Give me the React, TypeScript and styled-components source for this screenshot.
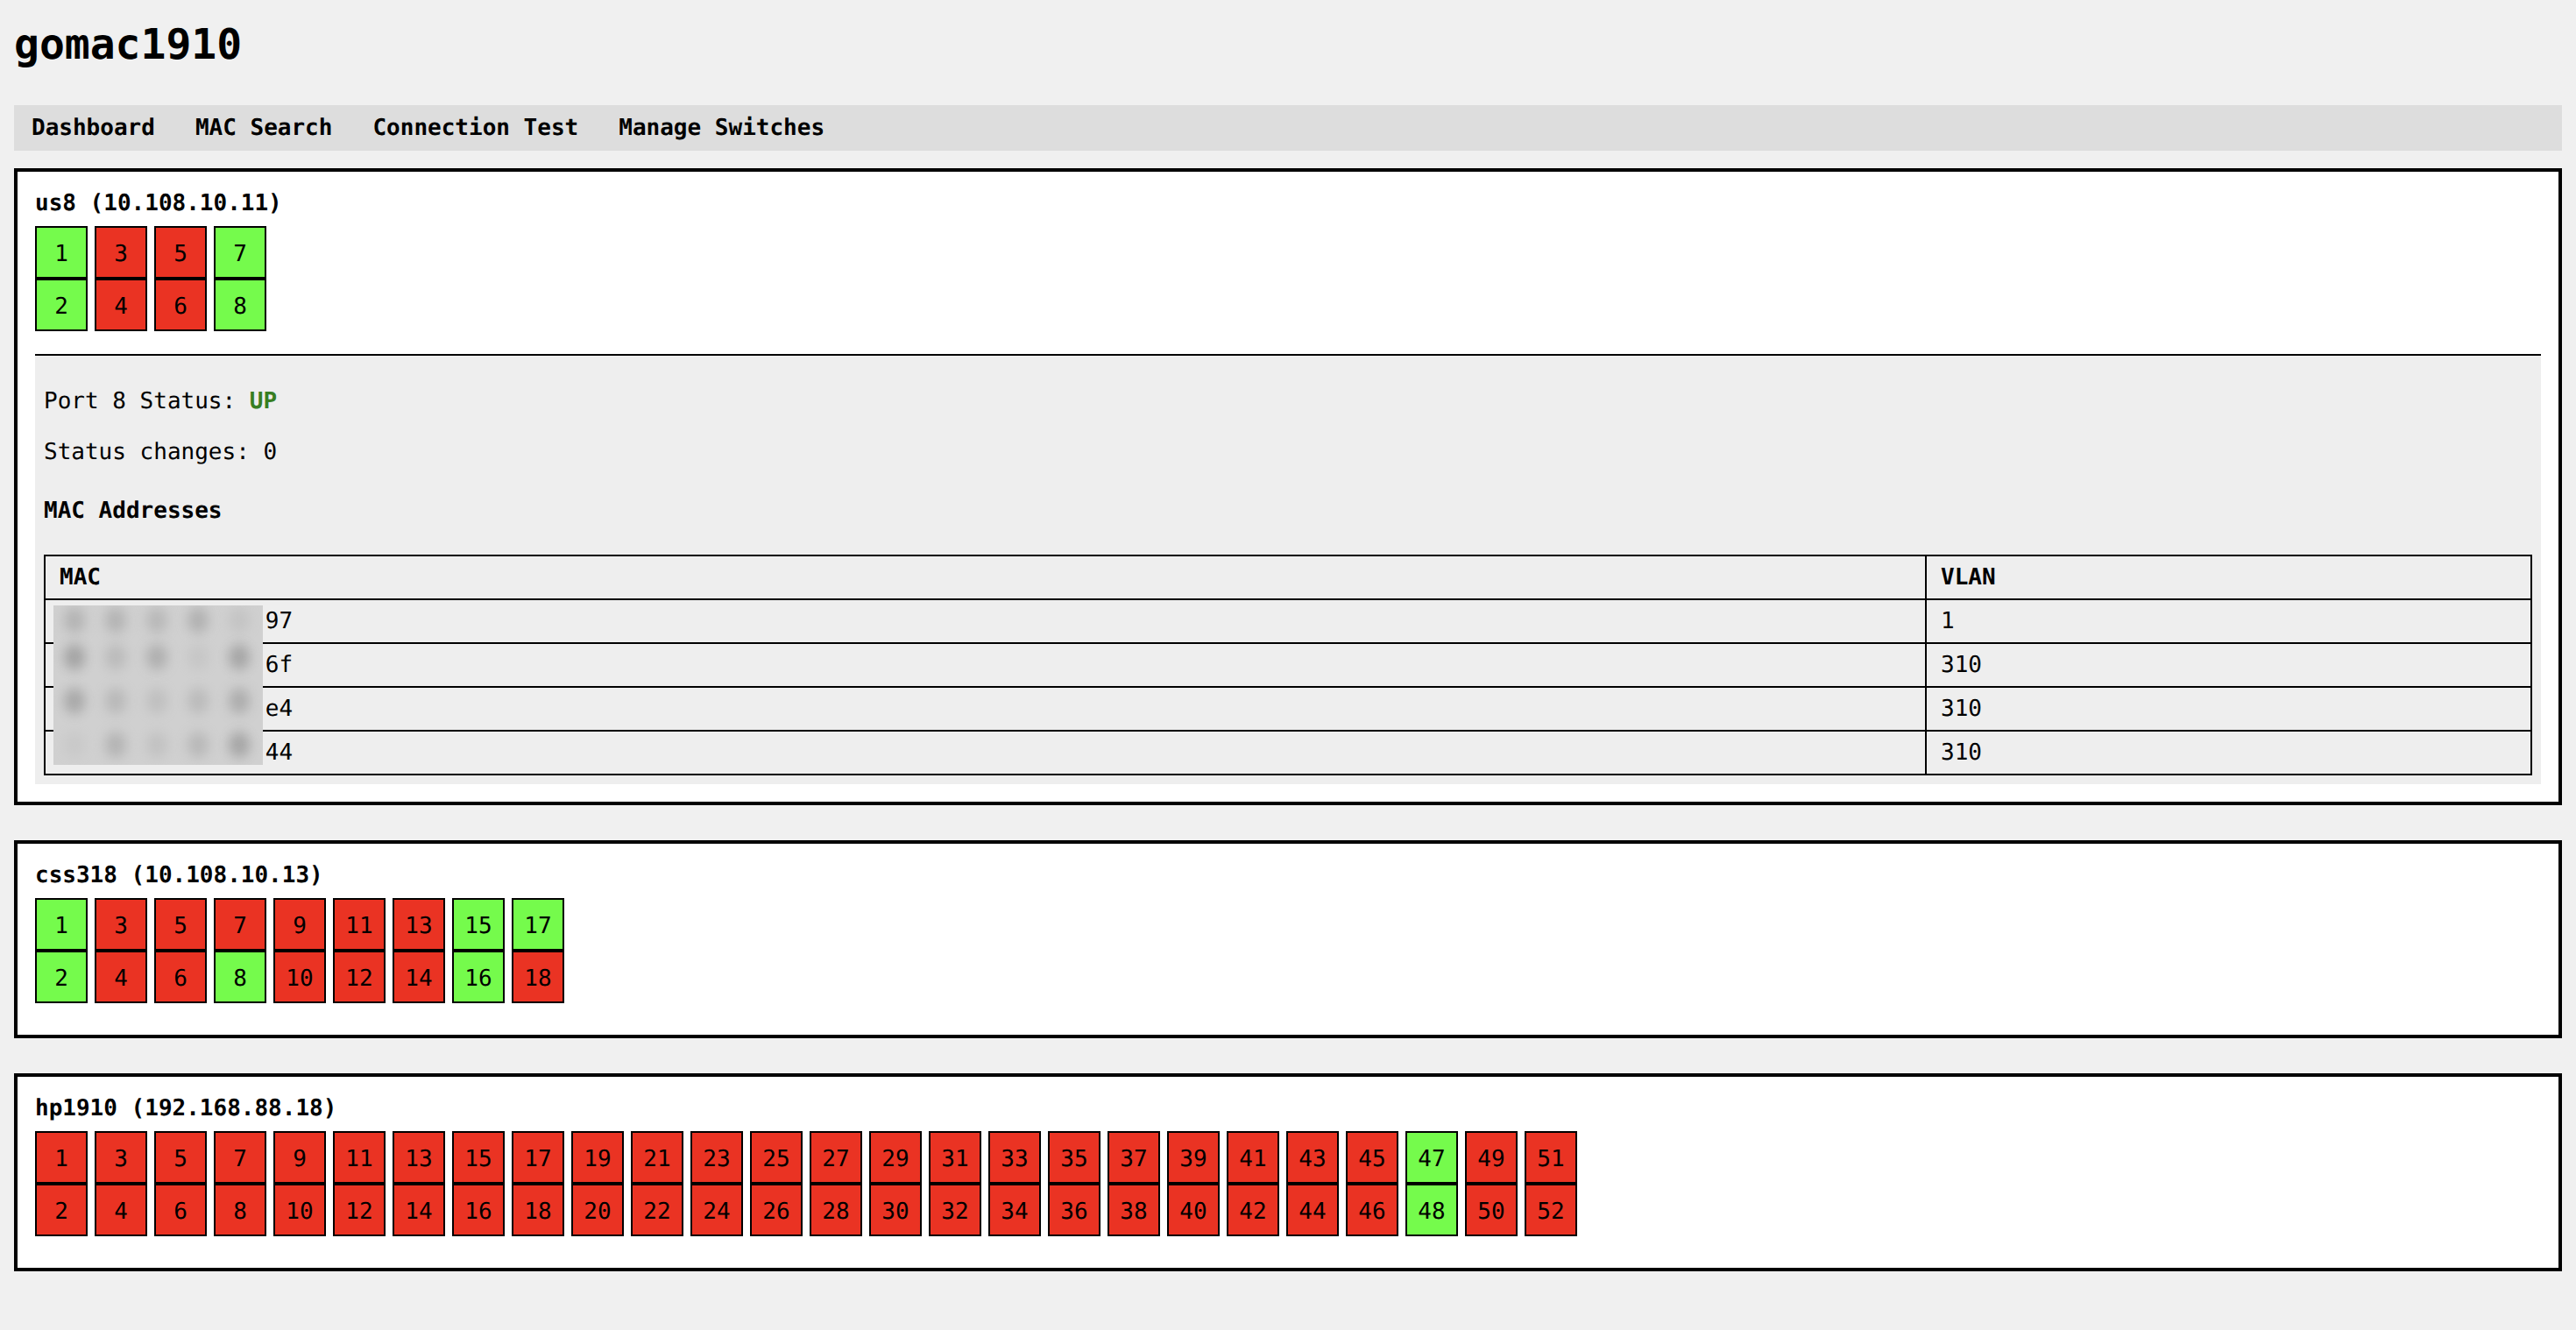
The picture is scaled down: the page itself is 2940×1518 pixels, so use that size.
import styled, { createGlobalStyle } from "styled-components";

const GlobalStyle = createGlobalStyle`
	html, body {
		margin: 0;
		background: #f0f0f0;
	}
	body {
		padding: 16px;
		min-height: 1518px;
		box-sizing: border-box;
		font-family: "DejaVu Sans Mono", monospace;
		font-size: 26px;
		line-height: 30px;
		color: #000;
		text-rendering: geometricPrecision;
	}
`;

const Title = styled.h1`
	height: 72px;
	margin: 0;
	font-size: 48px;
	line-height: 70px;
	font-weight: 700;
`;

const Nav = styled.nav`
	display: flex;
	align-items: center;
	gap: 46px;
	height: 52px;
	margin-top: 32px;
	padding: 0 20px;
	background: #ddd;
`;

const NavLink = styled.a`
	color: #000;
	font-weight: 700;
	text-decoration: none;
`;

const Card = styled.section`
	margin-top: 20px;
	margin-bottom: 40px;
	padding: 20px;
	background: #fff;
	border: 4px solid #000;
`;

const CardTitle = styled.h3`
	margin: 0 0 10px;
	font-size: 26px;
	line-height: 32px;
	font-weight: 700;
`;

const PortGrid = styled.div`
	display: flex;
	gap: 8px;
	margin-bottom: 16px;
`;

const PortColumn = styled.div`
	display: flex;
	flex-direction: column;
`;

const Port = styled.div<{ $up: boolean }>`
	display: flex;
	align-items: center;
	justify-content: center;
	width: 60px;
	height: 60px;
	box-sizing: border-box;
	padding-top: 4px;
	border: 2px solid #000;
	background: ${(p) => (p.$up ? "#75fb4c" : "#ea3323")};
`;

const Divider = styled.hr`
	height: 2px;
	margin: 26px 0 0;
	border: none;
	background: #000;
`;

const Details = styled.div`
	padding: 10px;
	background: #eee;
`;

const Paragraph = styled.p`
	margin: 26px 0;
	line-height: 32px;
`;

const StatusValue = styled.strong`
	color: #377e22;
`;

const SectionTitle = styled.h4`
	margin: 36px 0 35px;
	font-size: 26px;
	line-height: 30px;
	font-weight: 700;
`;

const TableWrap = styled.div`
	position: relative;
`;

const Table = styled.table`
	width: 100%;
	table-layout: fixed;
	border-collapse: collapse;
	border: 2px solid #000;
`;

const HeadCell = styled.th<{ $width?: string }>`
	width: ${(p) => p.$width ?? "auto"};
	height: 50px;
	padding: 0 16px;
	box-sizing: border-box;
	border: 2px solid #000;
	font-weight: 700;
	text-align: left;
`;

const Cell = styled.td`
	height: 50px;
	padding: 0 16px;
	box-sizing: border-box;
	border: 2px solid #000;
`;

const HiddenOctets = styled.span`
	visibility: hidden;
`;

// redaction patch over the first five octets of every MAC
const BlurPatch = styled.div`
	position: absolute;
	left: 11px;
	top: 58px;
	width: 239px;
	height: 182px;
	overflow: hidden;
	display: grid;
	grid-template-columns: repeat(5, 47px);
	grid-template-rows: 34px repeat(3, 50px);
	background: #d0d0d0;
`;

const Smudge = styled.div`
	display: flex;
	align-items: center;
	justify-content: center;
`;

const SmudgeDot = styled.div`
	flex: none;
	width: 24px;
	height: 30px;
	border-radius: 50%;
	background: #a0a0a0;
	filter: blur(7px);
`;

const smudges = [
	0.6, 0.6, 0.5, 0.65, 0.25,
	0.95, 0.45, 0.7, 0.2, 0.9,
	0.85, 0.5, 0.35, 0.45, 0.75,
	0.15, 0.6, 0.3, 0.5, 0.9,
];

const macs = [
	{ tail: "97", vlan: 1 },
	{ tail: "6f", vlan: 310 },
	{ tail: "e4", vlan: 310 },
	{ tail: "44", vlan: 310 },
];

function PortRow({ count, up }: { count: number; up: number[] }) {
	const columns = [];
	for (let n = 1; n < count; n += 2) {
		columns.push(
			<PortColumn key={n}>
				<Port $up={up.includes(n)}>{n}</Port>
				<Port $up={up.includes(n + 1)}>{n + 1}</Port>
			</PortColumn>,
		);
	}
	return <PortGrid>{columns}</PortGrid>;
}

export default function App() {
	return (
		<>
			<GlobalStyle />
			<Title>gomac1910</Title>
			<Nav>
				<NavLink href="#">Dashboard</NavLink>
				<NavLink href="#">MAC Search</NavLink>
				<NavLink href="#">Connection Test</NavLink>
				<NavLink href="#">Manage Switches</NavLink>
			</Nav>

			<Card>
				<CardTitle>us8 (10.108.10.11)</CardTitle>
				<PortRow count={8} up={[1, 2, 7, 8]} />
				<Divider />
				<Details>
					<Paragraph>
						Port 8 Status: <StatusValue>UP</StatusValue>
					</Paragraph>
					<Paragraph>Status changes: 0</Paragraph>
					<SectionTitle>MAC Addresses</SectionTitle>
					<TableWrap>
						<Table>
							<thead>
								<tr>
									<HeadCell $width="2147px">MAC</HeadCell>
									<HeadCell>VLAN</HeadCell>
								</tr>
							</thead>
							<tbody>
								{macs.map((mac) => (
									<tr key={mac.tail}>
										<Cell>
											<HiddenOctets>xx:xx:xx:xx:xx:</HiddenOctets>
											{mac.tail}
										</Cell>
										<Cell>{mac.vlan}</Cell>
									</tr>
								))}
							</tbody>
						</Table>
						<BlurPatch>
							{smudges.map((strength, i) => (
								<Smudge key={i}>
									<SmudgeDot style={{ opacity: strength }} />
								</Smudge>
							))}
						</BlurPatch>
					</TableWrap>
				</Details>
			</Card>

			<Card>
				<CardTitle>css318 (10.108.10.13)</CardTitle>
				<PortRow count={18} up={[1, 2, 8, 15, 16, 17]} />
			</Card>

			<Card>
				<CardTitle>hp1910 (192.168.88.18)</CardTitle>
				<PortRow count={52} up={[47, 48]} />
			</Card>
		</>
	);
}
